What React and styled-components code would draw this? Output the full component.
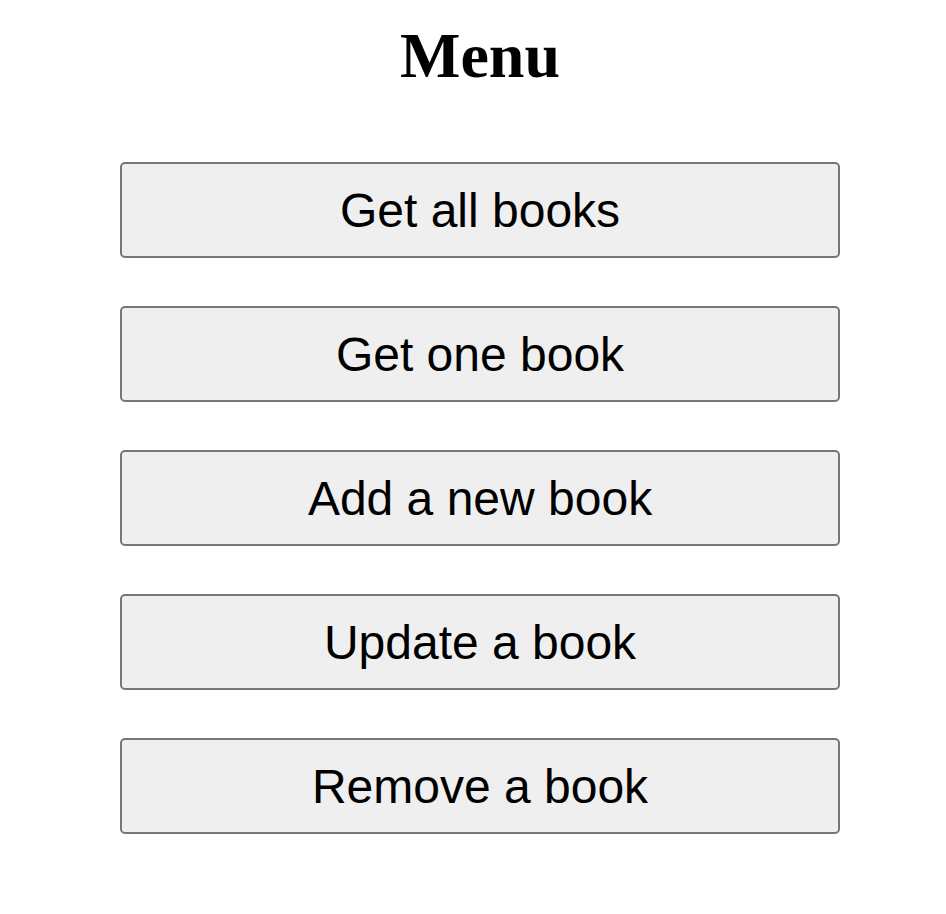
import React from "react";
import styled, { createGlobalStyle } from "styled-components";

const items = [
  "Get all books",
  "Get one book",
  "Add a new book",
  "Update a book",
  "Remove a book",
];

function App() {
  return (
    <>
      <GlobalStyle />
      <Page>
        <Title>Menu</Title>
        <MenuList>
          {items.map((label) => (
            <MenuButton key={label}>{label}</MenuButton>
          ))}
        </MenuList>
      </Page>
    </>
  );
}

const GlobalStyle = createGlobalStyle`
  html, body {
    margin: 0;
    padding: 0;
    background: #ffffff;
  }
`;

const Page = styled.div`
  display: flex;
  flex-direction: column;
  align-items: center;
  padding: 0 0 60px 14px;
`;

const Title = styled.h1`
  font-family: "Liberation Serif", "Times New Roman", serif;
  font-weight: bold;
  font-size: 64px;
  line-height: 1;
  margin: 24px 0 74px;
  color: #000;
`;

const MenuList = styled.div`
  display: flex;
  flex-direction: column;
  gap: 48px;
`;

const MenuButton = styled.button`
  width: 720px;
  height: 96px;
  box-sizing: border-box;
  border: 2px solid #767676;
  border-radius: 5px;
  background: #efefef;
  color: #000;
  font-family: "Liberation Sans", Arial, sans-serif;
  font-size: 48px;
  cursor: pointer;
`;

export default App;
